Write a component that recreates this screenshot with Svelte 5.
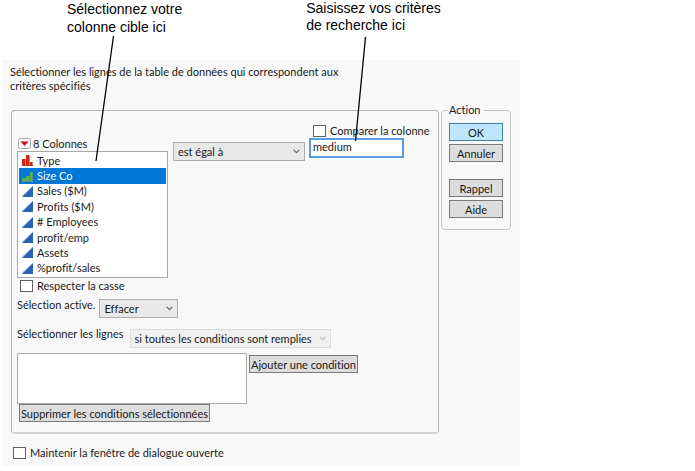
<script>
  const columns = [
    { name: 'Type', kind: 'nominal' },
    { name: 'Size Co', kind: 'ordinal' },
    { name: 'Sales ($M)', kind: 'continuous' },
    { name: 'Profits ($M)', kind: 'continuous' },
    { name: '# Employees', kind: 'continuous' },
    { name: 'profit/emp', kind: 'continuous' },
    { name: 'Assets', kind: 'continuous' },
    { name: '%profit/sales', kind: 'continuous' },
  ];

  let selected = $state('Size Co');
  let criteria = $state('medium');
  let compareColumn = $state(false);
  let matchCase = $state(false);
  let keepOpen = $state(false);
</script>

{#snippet chevron()}
  <svg class="chevron" width="7" height="5" viewBox="0 0 7 5" aria-hidden="true">
    <path d="M0.7 0.8 L3.5 3.6 L6.3 0.8" fill="none" stroke="currentColor" stroke-width="1.2" />
  </svg>
{/snippet}

<main>
  <div class="captions">
    <p class="caption-column">Sélectionnez votre<br />colonne cible ici</p>
    <p class="caption-criteria">Saisissez vos critères<br />de recherche ici</p>
  </div>

  <form class="dialog" onsubmit={(event) => event.preventDefault()}>
    <p class="intro">
      Sélectionner les lignes de la table de données qui correspondent aux<br />critères spécifiés
    </p>

    <div class="panels">
      <section class="panel">
        <div class="condition">
          <div class="columns">
            <div class="columns-title">
              <button type="button" class="menu-button" aria-label="Options des colonnes">
                <svg width="13" height="11" viewBox="0 0 13 11">
                  <rect x="0.5" y="0.5" width="12" height="10" rx="2" fill="#f4f4f4" stroke="#aaaaaa" />
                  <path d="M2.5 3.5 H10.5 L6.5 8 Z" fill="#c8101c" />
                </svg>
              </button>
              8 Colonnes
            </div>
            <ul class="column-list">
              {#each columns as column}
                <li>
                  <button
                    type="button"
                    class="column"
                    class:selected={selected === column.name}
                    aria-pressed={selected === column.name}
                    onclick={() => (selected = column.name)}
                  >
                    <svg width="11" height="11" viewBox="0 0 11 11" aria-hidden="true">
                      {#if column.kind === 'nominal'}
                        <path d="M0 4 H3 V10 H0 Z M4 0 H7 V10 H4 Z M8 7 H10 V10 H8 Z" fill="#d6280f" />
                        <path d="M3.5 4 V10 M7.5 1 V10 M10.5 7 V10" stroke="#c9897e" stroke-width="1" fill="none" />
                        <path d="M0 10.5 H11" stroke="#8d3a30" stroke-width="1" fill="none" />
                      {:else if column.kind === 'ordinal'}
                        <path d="M0 7 H3 V10 H0 Z M4 5 H7 V10 H4 Z M8 1 H10 V10 H8 Z" fill="#52b848" />
                        <path d="M3.5 7 V10 M7.5 5 V10 M10.5 1 V10 M0 10.5 H11" stroke="#5f8f86" stroke-width="1" fill="none" />
                      {:else}
                        <path d="M0 11 L11 0 V11 Z" fill="#2a62b8" />
                        <path d="M0 10.5 L10.5 0.5" stroke="#7ba3dc" stroke-width="1" fill="none" />
                      {/if}
                    </svg>
                    {column.name}
                  </button>
                </li>
              {/each}
            </ul>
          </div>

          <div class="dropdown operator">
            <select aria-label="Opérateur">
              <option>est égal à</option>
            </select>
            {@render chevron()}
          </div>

          <div class="criteria">
            <label class="check">
              <input type="checkbox" bind:checked={compareColumn} />
              Comparer la colonne
            </label>
            <input type="text" aria-label="Critères de recherche" bind:value={criteria} />
          </div>
        </div>

        <label class="check match-case">
          <input type="checkbox" bind:checked={matchCase} />
          Respecter la casse
        </label>

        <div class="option-row current">
          <label for="current-selection">Sélection active.</label>
          <div class="dropdown">
            <select id="current-selection">
              <option>Effacer</option>
            </select>
            {@render chevron()}
          </div>
        </div>

        <div class="option-row rows">
          <label for="row-rule">Sélectionner les lignes</label>
          <div class="dropdown">
            <select id="row-rule" disabled>
              <option>si toutes les conditions sont remplies</option>
            </select>
            {@render chevron()}
          </div>
        </div>

        <div class="conditions">
          <textarea aria-label="Conditions" readonly></textarea>
          <button type="button" class="push">Ajouter une condition</button>
        </div>
        <button type="button" class="push remove">Supprimer les conditions sélectionnées</button>
      </section>

      <fieldset class="actions">
        <legend>Action</legend>
        <button type="submit" class="push default">OK</button>
        <button type="button" class="push">Annuler</button>
        <button type="button" class="push recall">Rappel</button>
        <button type="button" class="push">Aide</button>
      </fieldset>
    </div>

    <label class="check keep-open">
      <input type="checkbox" bind:checked={keepOpen} />
      Maintenir la fenêtre de dialogue ouverte
    </label>
  </form>

  <!-- Callout lines from the captions to the controls -->
  <svg class="callouts" width="440" height="165" viewBox="0 0 440 165" aria-hidden="true">
    <path d="M113.5 36 L96 161 M365.5 37 L355.5 141" fill="none" stroke="#000" stroke-width="1.3" />
  </svg>
</main>

<style>
  :global(body) {
    margin: 0;
    background: #fff;
  }

  main {
    position: relative;
    font-family: Lato, 'Open Sans', sans-serif;
    font-size: 11px;
    font-variant-ligatures: none;
    line-height: 14px;
    color: #1a1a1a;
  }

  p {
    margin: 0;
  }

  button,
  input,
  select,
  textarea {
    box-sizing: border-box;
    margin: 0;
    font: inherit;
    font-variant-ligatures: none;
    color: inherit;
  }

  .captions {
    display: flex;
    gap: 124px;
    height: 60px;
    padding-left: 67px;
    box-sizing: border-box;
    font-family: 'Liberation Sans', Arial, sans-serif;
    font-size: 14px;
    line-height: 18px;
    color: #000;
  }

  .caption-criteria {
    line-height: 17px;
  }

  .callouts {
    position: absolute;
    top: 0;
    left: 0;
    pointer-events: none;
  }

  .dialog {
    box-sizing: border-box;
    max-width: 518px;
    margin-left: 2px;
    padding: 5px 9px 6px 8px;
    background: #f8f8f8;
  }

  .panels {
    display: flex;
    align-items: flex-start;
    gap: 2px;
    margin-top: 17px;
    padding-left: 1px;
  }

  .panel {
    flex: 1;
    min-width: 0;
    padding: 13px 6px 10px 5px;
    border: 1px solid #b4b4b4;
    border-bottom: 2px solid #d0d0d0;
    border-radius: 4px;
  }

  .condition {
    display: flex;
    align-items: flex-start;
  }

  .columns {
    width: 151px;
    padding-top: 12px;
  }

  .columns-title {
    display: flex;
    align-items: center;
    gap: 2px;
    height: 15px;
    padding-left: 1px;
  }

  .menu-button {
    display: flex;
    padding: 0;
    border: 0;
    background: none;
  }

  .column-list {
    display: grid;
    grid-template-rows: repeat(8, 1fr);
    box-sizing: border-box;
    height: 127px;
    margin: 0;
    padding: 1px;
    border: 1px solid #a8a8a8;
    background: #fff;
    list-style: none;
  }

  .column-list li {
    display: flex;
    min-height: 0;
  }

  .column {
    display: flex;
    align-items: center;
    gap: 4px;
    width: 100%;
    padding: 0 3px;
    border: 0;
    background: none;
    text-align: left;
  }

  .column.selected {
    background: #0078d7;
    color: #fff;
  }

  .dropdown {
    position: relative;
    color: #1a1a1a;
  }

  .dropdown select {
    display: block;
    width: 100%;
    height: 19px;
    padding: 0 16px 0 4px;
    border: 1px solid #adadad;
    border-radius: 0;
    background: #e8e8e8;
    appearance: none;
  }

  .dropdown select:disabled {
    border-color: #dcdcdc;
    background: #f0f0f0;
    color: inherit;
    opacity: 1;
  }

  .chevron {
    position: absolute;
    top: 7px;
    right: 5px;
    color: #666;
    pointer-events: none;
  }

  select:disabled + .chevron {
    color: #c0c0c0;
  }

  .operator {
    width: 132px;
    margin: 18px 4px 0 5px;
  }

  .check {
    display: flex;
    align-items: center;
    gap: 4px;
  }

  .check input {
    width: 13px;
    height: 12px;
    border: 1px solid #606060;
    background: #fff;
    appearance: none;
  }

  .check input:checked {
    box-shadow: inset 0 0 0 2px #fff;
    background: #333;
  }

  .criteria .check {
    padding-left: 4px;
    white-space: nowrap;
  }

  .criteria input[type='text'] {
    display: block;
    width: 95px;
    height: 20px;
    padding: 0 2px 3px;
    border: 2px solid #569de5;
    background: #fff;
    outline: none;
  }

  .match-case {
    margin-top: 1px;
    padding-left: 3px;
  }

  .option-row {
    display: flex;
    align-items: flex-start;
  }

  .option-row label {
    white-space: nowrap;
  }

  .current {
    gap: 4px;
    margin-top: 5px;
  }

  .current .dropdown {
    width: 79px;
    margin-top: 1px;
  }

  .rows {
    gap: 6px;
    margin-top: 9px;
  }

  .rows .dropdown {
    width: 201px;
    margin-top: 2px;
  }

  .conditions {
    display: flex;
    align-items: flex-start;
    gap: 2px;
    margin-top: 5px;
  }

  .conditions textarea {
    width: 230px;
    height: 51px;
    border: 1px solid #a8a8a8;
    background: #fff;
    resize: none;
  }

  .push {
    height: 18px;
    padding: 0 1px;
    border: 1px solid #7a7a7a;
    background: #dddddd;
    line-height: 15px;
    white-space: nowrap;
  }

  .conditions .push {
    margin-top: 2px;
  }

  .remove {
    display: block;
    margin: 0 0 0 2px;
  }

  .push.default {
    border-color: #3c7fb1;
    background: #bee6fd;
  }

  .actions {
    display: flex;
    flex-direction: column;
    gap: 3px;
    min-width: 0;
    margin: -7px 0 0;
    padding: 6px 7px 11px;
    border: 1px solid #c4c4c4;
    border-radius: 4px;
  }

  .actions legend {
    margin-left: -1px;
    padding: 0 3px 0 1px;
  }

  .actions .push {
    width: 54px;
  }

  .actions .recall {
    margin-top: 14px;
  }

  .keep-open {
    margin-top: 12px;
    padding-left: 3px;
  }
</style>
